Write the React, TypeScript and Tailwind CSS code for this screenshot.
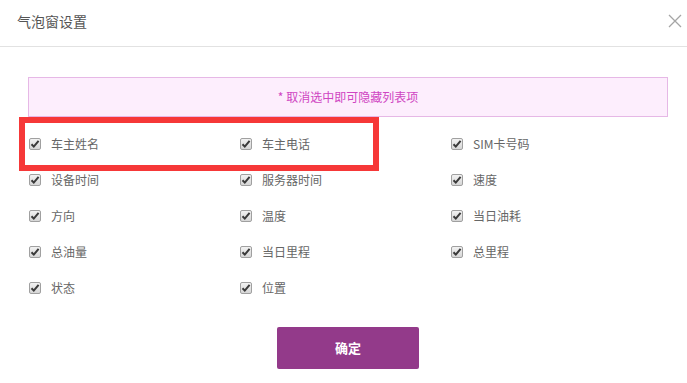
import React from 'react';

const columns: string[] = [
  '车主姓名', '车主电话', 'SIM卡号码',
  '设备时间', '服务器时间', '速度',
  '方向', '温度', '当日油耗',
  '总油量', '当日里程', '总里程',
  '状态', '位置',
];

function CheckBox() {
  return (
    <span className="w-[12px] h-[12px] rounded-[2px] border border-[#a0a0a0] bg-gradient-to-b from-[#f2f2f2] to-[#d6d6d6] flex items-center justify-center shrink-0">
      <svg width="10" height="10" viewBox="0 0 10 10">
        <path d="M1.5 5.2 L3.8 7.6 L8.6 1.8" fill="none" stroke="#3a3a3a" strokeWidth="2" />
      </svg>
    </span>
  );
}

export default function App() {
  return (
    <div
      className="w-[687px] h-[383px] bg-white relative overflow-hidden"
      style={{ fontFamily: '"Microsoft YaHei", "Noto Sans CJK SC", sans-serif' }}
    >
      <header className="h-[47px] border-b border-[#e2e2e2] flex items-center justify-between pl-[17px] pr-[4px]">
        <span className="text-[14px] text-[#555] pb-[3px]">气泡窗设置</span>
        <svg width="14" height="14" viewBox="0 0 14 14" className="mr-[1px] mb-[4px]">
          <path d="M1 1 L13 13 M13 1 L1 13" stroke="#a5a5a5" strokeWidth="1.3" />
        </svg>
      </header>

      <div className="ml-[28px] w-[640px] pt-[30px]">
        <div className="h-[40px] border border-[#e6b8e6] bg-[#fdeefd] flex items-center justify-center text-[12px] text-[#cf45c2]">
          * 取消选中即可隐藏列表项
        </div>

        <div className="grid grid-cols-[211px_211px_1fr] pl-[1px] mt-[9px]">
          {columns.map((c) => (
            <label key={c} className="h-[36px] flex items-center gap-[10px]">
              <CheckBox />
              <span className="text-[12px] text-[#666]">{c}</span>
            </label>
          ))}
        </div>

        <button className="block mx-auto mt-[21px] w-[142px] h-[42px] rounded-[2px] bg-[#933a8a] text-white text-[13px] font-bold">
          确定
        </button>
      </div>

      {/* annotation highlight */}
      <div className="absolute left-[19px] top-[117px] w-[360px] h-[54px] border-[6px] border-[#f63838]" />
    </div>
  );
}
